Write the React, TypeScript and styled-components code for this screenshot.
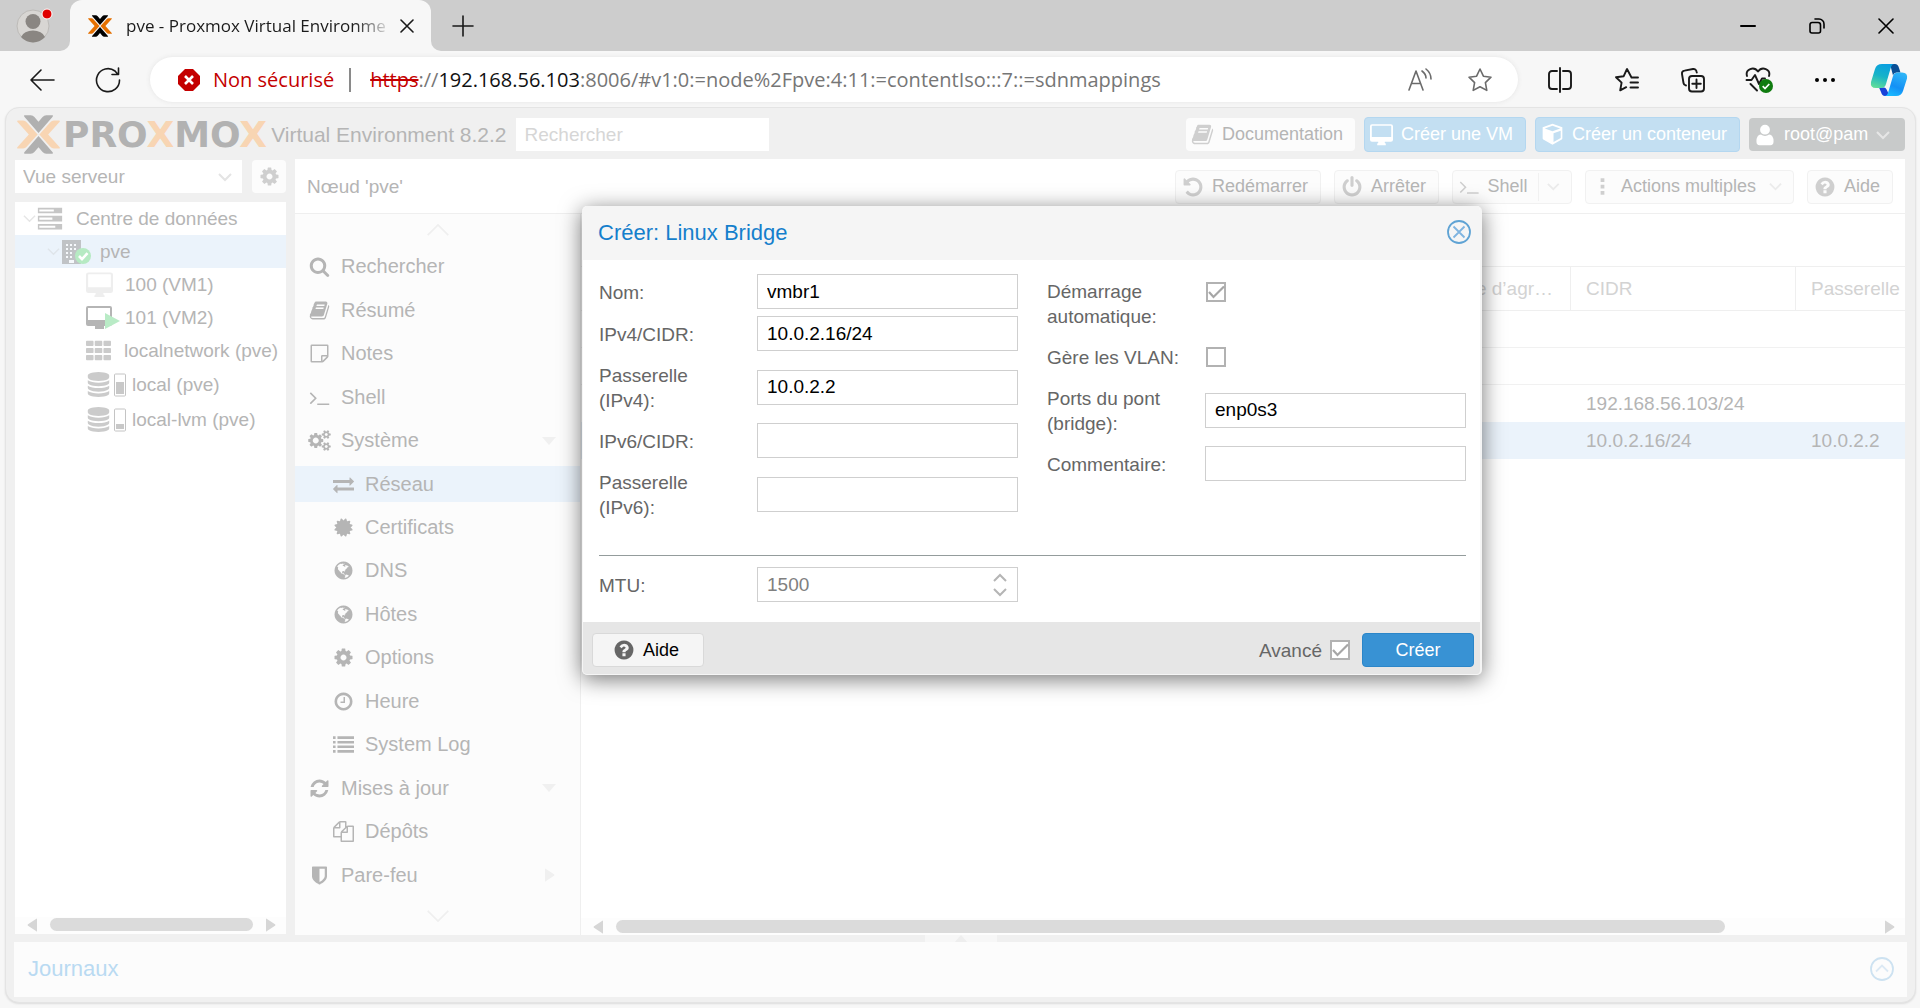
import React from "react";
import styled, { createGlobalStyle } from "styled-components";

const SANS = '"Liberation Sans", Arial, sans-serif';
const CHROME = '"Open Sans", "Noto Sans", sans-serif';

const GlobalStyle = createGlobalStyle`
  *, *::before, *::after { box-sizing: border-box; }
  body { margin: 0; overflow: hidden; background: #f7f7f7; font-family: ${SANS}; }
  button, input, select { font: inherit; color: inherit; margin: 0; }
  button { border: 0; background: none; padding: 0; cursor: default; }
`;

/* ---------- icon paths on a 1792 grid ---------- */
const P = {
  terminal:
    "M649 983l-466 466q-10 10-23 10t-23-10l-50-50q-10-10-10-23t10-23l393-393-393-393q-10-10-10-23t10-23l50-50q10-10 23-10t23 10l466 466q10 10 10 23t-10 23zm1079 457v64q0 14-9 23t-23 9h-960q-14 0-23-9t-9-23v-64q0-14 9-23t23-9h960q14 0 23 9t9 23z",
  book:
    "M1703 478q40 57 18 129l-275 906q-19 64-76.5 107.5t-122.5 43.5h-923q-77 0-148.5-53.5t-99.5-131.5q-24-67-2-127 0-4 3-27t4-37q1-8-3-21.5t-3-19.5q2-11 8-21t16.5-23.5 16.5-23.5q23-38 45-91.5t30-91.5q3-10 .5-30t-.5-28q3-11 17-28t17-23q21-36 42-92t25-90q1-9-2.5-32t.5-28q4-13 22-30.5t22-22.5q19-26 42.5-84.5t27.5-96.5q1-8-3-25.5t-2-26.5q2-8 9-18t18-23 17-21q8-12 16.5-30.5t15-35 16-36 19.5-32 26.5-23.5 36-11.5 47.5 5.5l-1 3q38-9 51-9h761q74 0 114 56t18 130l-274 906q-36 119-71.5 153.5t-128.5 34.5h-869q-27 0-38 15-11 16-1 43 24 70 144 70h923q29 0 56-15.5t35-41.5l300-987q7-22 5-57 38 15 59 43zm-1064 2q-4 13 2 22.5t20 9.5h608q13 0 25.5-9.5t16.5-22.5l21-64q4-13-2-22.5t-20-9.5h-608q-13 0-25.5 9.5t-16.5 22.5zm-83 256q-4 13 2 22.5t20 9.5h608q13 0 25.5-9.5t16.5-22.5l21-64q4-13-2-22.5t-20-9.5h-608q-13 0-25.5 9.5t-16.5 22.5z",
  globe:
    "M896 128q209 0 385.5 103t279.5 279.5 103 385.5-103 385.5-279.5 279.5-385.5 103-385.5-103-279.5-279.5-103-385.5 103-385.5 279.5-279.5 385.5-103zm274 521q-2 1-9.5 9.5t-13.5 9.5q2 0 4.5-5t5-11 3.5-7q6-7 22-15 14-6 52-12 34-8 51 11-2-2 9.5-13t14.5-12q3-2 15-4.5t15-7.5l2-22q-12 1-17.5-7t-6.5-21q0 2-6 8 0-7-4.5-8t-11.5 1-9 1q-10-3-15-7.5t-8-16.5-4-15q-2-5-9.5-11t-9.5-10q-1-2-2.5-5.5t-3-6.5-4-5.5-5.5-2.5-7 5-7.5 10-4.5 5q-3-2-6-1.5t-4.5 1-4.5 3-5 3.5q-3 2-8.5 3t-8.5 2q15-5-1-11-10-4-16-3 9-4 7.5-12t-8.5-14h5q-1-4-8.5-8.5t-17.5-8.5-13-6q-8-5-34-9.5t-33-.5q-5 6-4.5 10.5t4 14 3.5 12.5q1 6-5.5 13t-6.5 12q0 7 14 15.5t10 21.5q-3 8-16 16t-16 12q-5 8-1.5 18.5t10.5 16.5q2 2 1.5 4t-3.5 4.5-5.5 4-6.5 3.5l-3 2q-11 5-20.5-6t-13.5-26q-7-25-16-30-23-8-29 1-5-13-41-26-25-9-58-4 6-1 0-15-7-15-19-12 3-6 4-17.5t1-13.5q3-13 12-23 1-1 7-8.5t9.5-13.5.5-6q35 4 50-11 5-5 11.5-17t10.5-17q9-6 14-5.5t14.5 5.5 14.5 5q14 1 15.5-11t-7.5-20q12 1 3-17-4-7-8-9-12-4-27 5-8 4 2 8-1-1-9.5 10.5t-16.5 17.5-16-5q-1-1-5.5-13.5t-9.5-13.5q-8 0-16 15 3-8-11-15t-24-8q19-12-8-27-7-4-20.5-5t-19.5 4q-5 7-5.5 11.5t5 8 10.5 5.5 11.5 4 8.5 3q14 10 8 14-2 1-8.5 3.5t-11.5 4.5-6 4q-3 4 0 14t-2 14q-5-5-9-17.5t-7-16.5q7 9-25 6l-10-1q-4 0-16 2t-20.5 1-13.5-8q-4-8 0-20 1-4 4-2-4-3-11-9.5t-10-8.5q-46 15-94 41 6 1 12-1 5-2 13-6.5t10-5.5q34-14 42-7l5-5q14 16 20 25-7-4-30-1-20 6-22 12 7 12 5 18-4-3-11.5-10t-14.5-11-15-5q-16 0-22 1-146 80-235 222 7 7 12 8 4 1 5 9t2.5 11 11.5-3q9 8 3 19 1-1 44 27 19 17 21 21 3 11-10 18-1-2-9-9t-9-4q-3 5 .5 18.5t10.5 12.5q-7 0-9.5 16t-2.5 35.5-1 23.5l2 1q-3 12 5.5 34.5t21.5 19.5q-13 3 20 43 6 8 8 9 3 2 12 7.5t15 10 10 10.5q4 5 10 22.5t14 23.5q-2 6 9.5 20t10.5 23q-1 0-2.5 1t-2.5 1q3 7 15.5 14t15.5 13q1 3 2 10t3 11 8 2q2-20-24-62-15-25-17-29-3-5-5.5-15.5t-4.5-14.5q2 0 6 1.5t8.5 3.5 7.5 4 2 3q-3 7 2 17.5t12 18.5 17 19 12 13q6 6 14 19.5t0 13.5q9 0 20 10.5t17 19.5q5 8 8 26t5 24q2 7 8.5 13.5t12.5 9.5l16 8 13 7q5 2 18.5 10.5t21.5 11.5q10 4 16 4t14.5-2.5 13.5-3.5q15-2 29 15t21 21q36 19 55 11-2 1 .5 7.5t8 15.5 9 14.5 5.5 8.5q5 6 18 15t18 15q6-4 7-9-3 8 7 20t18 10q14-3 14-32-31 15-49-18 0-1-2.5-5.5t-4-8.5-2.5-8.5 0-7.5 5-3q9 0 10-3.5t-2-12.5-4-13q-1-8-11-20t-12-15q-5 9-16 8t-16-9q0 1-1.5 5.5t-1.5 6.5q-13 0-15-1 1-3 2.5-17.5t3.5-22.5q1-4 5.5-12t7.5-14.5 4-12.5-4.5-9.5-17.5-2.5q-19 1-26 20-1 3-3 10.5t-5 11.5-9 7q-7 3-24 2t-24-5q-13-8-22.5-29t-9.5-37q0-10 2.5-26.5t3-25-5.5-24.5q3-2 9-9.5t10-10.5q2-1 4.5-1.5t4.5 0 4-1.5 3-6q-1-1-4-3-3-3-4-3 7 3 28.5-1.5t27.5 1.5q15 11 22-2 0-1-2.5-9.5t-.5-13.5q5 27 29 9 3 3 15.5 5t17.5 5q3 2 7 5.5t5.5 4.5 5-.5 8.5-6.5q10 14 12 24 11 40 19 44 7 3 11 2t4.5-9.5 0-14-1.5-12.5l-1-8v-18l-1-8q-15-3-18.5-12t1.5-18.5 15-18.5q1-1 8-3.5t15.5-6.5 12.5-8q21-19 15-35 7 0 11-9-1 0-5-3t-7.5-5-4.5-2q9-5 2-16 5-3 7.5-11t7.5-10q9 12 21 2 8-8 1-16 5-7 20.5-10.5t18.5-9.5q7 2 8-2t1-12 3-12q4-5 15-9t13-5l17-11q3-4 0-4 18 2 31-11 10-11-6-20 3-6-3-9.5t-15-5.5q3-1 11.5-.5t10.5-1.5q15-10-7-16-17-5-43 12zm-163 877q206-36 351-189-3-3-12.5-4.5t-12.5-3.5q-18-7-24-8 1-7-2.5-13t-8-9-12.5-8-11-7q-2-2-7-6t-7-5.5-7.5-4.5-8.5-2-10 1l-3 1q-3 1-5.5 2.5t-5.5 3-4 3 0 2.5q-21-17-36-22-5-1-11-5.5t-10.5-7-10-1.5-11.5 7q-5 5-6 15t-2 13q-7-5 0-17.5t2-18.5q-3-6-10.5-4.5t-12 4.5-11.5 8.5-9 6.5-8.5 5.5-8.5 7.5q-3 4-6 12t-5 11q-2-4-11.5-6.5t-9.5-5.5q2 10 4 35t5 38q7 31-12 48-27 25-29 40-4 22 12 26 0 7-8 20.5t-7 21.5q0 6 2 16z",
  cog:
    "M1152 896q0-106-75-181t-181-75-181 75-75 181 75 181 181 75 181-75 75-181zm512-109v222q0 12-8 23t-20 13l-185 28q-19 54-39 91 35 50 107 138 10 12 10 25t-9 23q-27 37-99 108t-94 71q-12 0-26-9l-138-108q-44 23-91 38-16 136-29 186-7 28-36 28h-222q-14 0-24.5-8.5t-11.5-21.5l-28-184q-49-16-90-37l-141 107q-10 9-25 9-14 0-25-11-126-114-165-168-7-10-7-23 0-12 8-23 15-21 51-66.5t54-70.5q-27-50-41-99l-183-27q-13-2-21-12.5t-8-23.5v-222q0-12 8-23t19-13l186-28q14-46 39-92-40-57-107-138-10-12-10-24 0-10 9-23 26-36 98.5-107.5t94.5-71.5q13 0 26 10l138 107q44-23 91-38 16-136 29-186 7-28 36-28h222q14 0 24.5 8.5t11.5 21.5l28 184q49 16 90 37l142-107q9-9 24-9 13 0 25 10 129 119 165 170 7 8 7 22 0 12-8 23-15 21-51 66.5t-54 70.5q26 50 41 98l183 28q13 2 21 12.5t8 23.5z",
  cogs:
    "M896 896q0-106-75-181t-181-75-181 75-75 181 75 181 181 75 181-75 75-181zm768 512q0-52-38-90t-90-38-90 38-38 90q0 53 37.5 90.5t90.5 37.5 90.5-37.5 37.5-90.5zm0-1024q0-52-38-90t-90-38-90 38-38 90q0 53 37.5 90.5t90.5 37.5 90.5-37.5 37.5-90.5zm-384 421v185q0 10-7 19.5t-16 10.5l-155 24q-11 35-32 76 34 48 90 115 7 11 7 20 0 12-7 19-23 30-82.5 89.5t-78.5 59.5q-11 0-21-7l-115-90q-37 19-77 31-11 108-23 155-7 24-30 24h-186q-11 0-20-7.5t-10-17.5l-23-153q-34-10-75-31l-118 89q-7 7-20 7-11 0-21-8-144-133-144-160 0-9 7-19 10-14 41-53t47-61q-23-44-35-82l-152-24q-10-1-17-9.5t-7-19.5v-185q0-10 7-19.5t16-10.5l155-24q11-35 32-76-34-48-90-115-7-11-7-20 0-12 7-20 22-30 82-89t79-59q11 0 21 7l115 90q34-18 77-32 11-108 23-154 7-24 30-24h186q11 0 20 7.5t10 17.5l23 153q34 10 75 31l118-89q8-7 20-7 11 0 21 8 144 133 144 160 0 8-7 19-12 16-42 54t-45 60q23 48 34 82l152 23q10 2 17 10.5t7 19.5zm640 533v140q0 16-149 31-12 27-30 52 51 113 51 138 0 4-4 7-122 71-124 71-8 0-46-47t-52-68q-20 2-30 2t-30-2q-14 21-52 68t-46 47q-2 0-124-71-4-3-4-7 0-25 51-138-18-25-30-52-149-15-149-31v-140q0-16 149-31 13-29 30-52-51-113-51-138 0-4 4-7 4-2 35-20t59-34 30-16q8 0 46 46.5t52 67.5q20-2 30-2t30 2q51-71 92-112l6-2q4 0 124 70 4 3 4 7 0 25-51 138 17 23 30 52 149 15 149 31zm0-1024v140q0 16-149 31-12 27-30 52 51 113 51 138 0 4-4 7-122 71-124 71-8 0-46-47t-52-68q-20 2-30 2t-30-2q-14 21-52 68t-46 47q-2 0-124-71-4-3-4-7 0-25 51-138-18-25-30-52-149-15-149-31v-140q0-16 149-31 13-29 30-52-51-113-51-138 0-4 4-7 4-2 35-20t59-34 30-16q8 0 46 46.5t52 67.5q20-2 30-2t30 2q51-71 92-112l6-2q4 0 124 70 4 3 4 7 0 25-51 138 17 23 30 52 149 15 149 31z",
  search:
    "M1216 832q0-185-131.5-316.5t-316.5-131.5-316.5 131.5-131.5 316.5 131.5 316.5 316.5 131.5 316.5-131.5 131.5-316.5zm512 832q0 52-38 90t-90 38q-54 0-90-38l-343-342q-179 124-399 124-143 0-273.5-55.5t-225-150-150-225-55.5-273.5 55.5-273.5 150-225 225-150 273.5-55.5 273.5 55.5 225 150 150 225 55.5 273.5q0 220-124 399l343 343q37 37 37 90z",
  certificate:
    "M1504 896l138 135q30 28 20 70-12 41-52 51l-188 48 53 186q12 41-19 70-29 31-70 19l-186-53-48 188q-10 40-51 52-12 2-19 2-31 0-51-22l-135-138-135 138q-28 30-70 20-41-11-51-52l-48-188-186 53q-41 12-70-19-31-29-19-70l53-186-188-48q-40-10-52-51-10-42 20-70l138-135-138-135q-30-28-20-70 12-41 52-51l188-48-53-186q-12-41 19-70 29-31 70-19l186 53 48-188q10-41 51-51 41-12 70 19l135 139 135-139q29-30 70-19 41 10 51 51l48 188 186-53q41-12 70 19 31 29 19 70l-53 186 188 48q40 10 52 51 10 42-20 70z",
  refresh:
    "M1639 1056q0 5-1 7-64 268-268 434.5t-478 166.5q-146 0-282.5-55t-243.5-157l-129 129q-19 19-45 19t-45-19-19-45v-448q0-26 19-45t45-19h448q26 0 45 19t19 45-19 45l-137 137q71 66 161 102t187 36q134 0 250-65t186-179q11-17 53-117 8-23 30-23h192q13 0 22.5 9.5t9.5 22.5zm25-800v448q0 26-19 45t-45 19h-448q-26 0-45-19t-19-45 19-45l138-138q-148-137-349-137-134 0-250 65t-186 179q-11 17-53 117-8 23-30 23h-199q-13 0-22.5-9.5t-9.5-22.5v-7q65-268 270-434.5t480-166.5q146 0 284 55.5t245 156.5l130-129q19-19 45-19t45 19 19 45z",
  exchange:
    "M1792 1184v192q0 13-9.5 22.5t-22.5 9.5h-1376v192q0 13-9.5 22.5t-22.5 9.5q-12 0-24-10l-319-320q-9-9-9-22 0-14 9-23l320-320q9-9 23-9 13 0 22.5 9.5t9.5 22.5v192h1376q13 0 22.5 9.5t9.5 22.5zm0-544q0 14-9 23l-320 320q-9 9-23 9-13 0-22.5-9.5t-9.5-22.5v-192h-1376q-13 0-22.5-9.5t-9.5-22.5v-192q0-13 9.5-22.5t22.5-9.5h1376v-192q0-14 9-23t23-9q12 0 24 10l319 319q9 9 9 23z",
  clock:
    "M1024 544v448q0 14-9 23t-23 9h-320q-14 0-23-9t-9-23v-64q0-14 9-23t23-9h224v-352q0-14 9-23t23-9h64q14 0 23 9t9 23zm416 352q0-148-73-273t-198-198-273-73-273 73-198 198-73 273 73 273 198 198 273 73 273-73 198-198 73-273zm224 0q0 209-103 385.5t-279.5 279.5-385.5 103-385.5-103-279.5-279.5-103-385.5 103-385.5 279.5-279.5 385.5-103 385.5 103 279.5 279.5 103 385.5z",
  question:
    "M1024 1376v-192q0-14-9-23t-23-9h-192q-14 0-23 9t-9 23v192q0 14 9 23t23 9h192q14 0 23-9t9-23zm256-672q0-88-55.5-163t-138.5-116-170-41q-243 0-371 213-15 24 8 42l132 100q7 6 19 6 16 0 25-12 53-68 86-92 34-24 86-24 48 0 85.5 26t37.5 59q0 38-20 61t-68 45q-63 28-115.5 86.5t-52.5 125.5v36q0 14 9 23t23 9h192q14 0 23-9t9-23q0-19 21.5-49.5t54.5-49.5q32-18 49-28.5t46-35 44.5-48 28-60.5 12.5-81zm384 192q0 209-103 385.5t-279.5 279.5-385.5 103-385.5-103-279.5-279.5-103-385.5 103-385.5 279.5-279.5 385.5-103 385.5 103 279.5 279.5 103 385.5z",
  power:
    "M1664 896q0 156-61 298t-164 245-245 164-298 61-298-61-245-164-164-245-61-298q0-182 80.5-343t226.5-270q43-32 95.5-25t83.5 50q32 42 24.5 94.5t-49.5 84.5q-98 74-151.5 181t-53.5 228q0 104 40.5 198.5t109.5 163.5 163.5 109.5 198.5 40.5 198.5-40.5 163.5-109.5 109.5-163.5 40.5-198.5q0-121-53.5-228t-151.5-181q-42-32-49.5-84.5t24.5-94.5q31-43 84-50t95 25q146 109 226.5 270t80.5 343zm-640-768v640q0 52-38 90t-90 38-90-38-38-90v-640q0-52 38-90t90-38 90 38 38 90z",
  undo:
    "M1664 896q0 156-61 298t-164 245-245 164-298 61q-172 0-327-72.5t-264-204.5q-7-10-6.5-22.5t8.5-20.5l137-138q10-9 25-9 16 2 23 12 73 95 179 147t225 52q104 0 198.5-40.5t163.5-109.5 109.5-163.5 40.5-198.5-40.5-198.5-109.5-163.5-163.5-109.5-198.5-40.5q-98 0-188 35.5t-160 101.5l137 138q31 30 14 69-17 40-59 40h-448q-26 0-45-19t-19-45v-448q0-42 40-59 39-17 69 14l130 129q107-101 244.5-156.5t284.5-55.5q156 0 298 61t245 164 164 245 61 298z",
  database:
    "M896 768q237 0 443-43t325-127v170q0 69-103 128t-280 93.5-385 34.5-385-34.5-280-93.5-103-128v-170q119 84 325 127t443 43zm0 768q237 0 443-43t325-127v170q0 69-103 128t-280 93.5-385 34.5-385-34.5-280-93.5-103-128v-170q119 84 325 127t443 43zm0-384q237 0 443-43t325-127v170q0 69-103 128t-280 93.5-385 34.5-385-34.5-280-93.5-103-128v-170q119 84 325 127t443 43zm0-1152q208 0 385 34.5t280 93.5 103 128v128q0 69-103 128t-280 93.5-385 34.5-385-34.5-280-93.5-103-128v-128q0-69 103-128t280-93.5 385-34.5z",
  files:
    "M1696 384q40 0 68 28t28 68v1216q0 40-28 68t-68 28h-960q-40 0-68-28t-28-68v-288h-544q-40 0-68-28t-28-68v-672q0-40 20-88t48-76l408-408q28-28 76-48t88-20h416q40 0 68 28t28 68v328q68-40 128-40h416zm-544 213l-299 299h299v-299zm-640-384l-299 299h299v-299zm196 647l316-316v-416h-384v416q0 40-28 68t-68 28h-416v640h512v-256q0-40 20-88t48-76zm956 804v-1152h-384v416q0 40-28 68t-68 28h-416v640h896z",
  shield:
    "M1344 960v-640h-448v1137q119-63 213-137 235-184 235-360zm192-768v768q0 86-33.5 170.5t-83 150-118 127.5-126.5 103-121 77.5-89.5 49.5-42.5 20q-12 6-26 6t-26-6q-16-7-42.5-20t-89.5-49.5-121-77.5-126.5-103-118-127.5-83-150-33.5-170.5v-768q0-26 19-45t45-19h1152q26 0 45 19t19 45z",
  list:
    "M0 200h220v220h-220zM380 200h1412v220h-1412zM0 590h220v220h-220zM380 590h1412v220h-1412zM0 980h220v220h-220zM380 980h1412v220h-1412zM0 1370h220v220h-220zM380 1370h1412v220h-1412z",
  note:
    "M240 128h1312q112 0 112 112v890q0 80-56 136l-342 342q-56 56-136 56h-890q-112 0-112-112v-1312q0-112 112-112zm16 128v1280h768v-400q0-112 112-112h400v-768zm896 896v360l360-360z",
  cube:
    "M896 60l768 280v850q0 60-50 88l-718 420-718-420q-50-28-50-88v-850zm0 150l-600 218 600 218 600-218zm640 390l-560 204v680l560-320z",
  user:
    "M896 64a400 400 0 0 1 400 400a400 400 0 0 1-800 0a400 400 0 0 1 400-400zM560 860q150 110 336 110t336-110q360 40 360 560 0 308-260 308h-872q-260 0-260-308 0-520 360-560z",
  ellipsis:
    "M736 192h320v320h-320zM736 736h320v320h-320zM736 1280h320v320h-320z",
  grid:
    "M60 200h420q60 0 60 60v250q0 60-60 60h-420q-60 0-60-60v-250q0-60 60-60zm626 0h420q60 0 60 60v250q0 60-60 60h-420q-60 0-60-60v-250q0-60 60-60zm626 0h420q60 0 60 60v250q0 60-60 60h-420q-60 0-60-60v-250q0-60 60-60zM60 710h420q60 0 60 60v250q0 60-60 60h-420q-60 0-60-60v-250q0-60 60-60zm626 0h420q60 0 60 60v250q0 60-60 60h-420q-60 0-60-60v-250q0-60 60-60zm626 0h420q60 0 60 60v250q0 60-60 60h-420q-60 0-60-60v-250q0-60 60-60zM60 1220h420q60 0 60 60v250q0 60-60 60h-420q-60 0-60-60v-250q0-60 60-60zm626 0h420q60 0 60 60v250q0 60-60 60h-420q-60 0-60-60v-250q0-60 60-60zm626 0h420q60 0 60 60v250q0 60-60 60h-420q-60 0-60-60v-250q0-60 60-60z",
  server:
    "M60 120h1672v380h-1672zm100 120v140h1000v-140zM60 680h1672v380h-1672zm100 120v140h900v-140zM60 1240h1672v380h-1672zm100 120v140h1100v-140z",
  desktop:
    "M160 96h1472q160 0 160 160v1050q0 160-160 160h-480v100q80 0 80 100v60h-672v-60q0-100 80-100v-100h-480q-160 0-160-160v-1050q0-160 160-160zm20 120q-40 0-40 40v830h1512v-830q0-40-40-40z",
};

type IconName = keyof typeof P;

const Fa = ({ name, size = 21, color = "currentColor", wide = false }: { name: IconName; size?: number; color?: string; wide?: boolean }) => (
  <svg width={wide ? Math.round(size * 1.1) : size} height={size} viewBox={wide ? "0 0 1920 1792" : "0 0 1792 1792"} aria-hidden="true">
    <path d={P[name]} fill={color} fillRule="evenodd" />
  </svg>
);

const Chevron = ({ w = 14, dir = "down", color = "#d9d9d9", stroke = 2 }: { w?: number; dir?: "down" | "up"; color?: string; stroke?: number }) => (
  <svg width={w} height={w} viewBox="0 0 14 14" fill="none" aria-hidden="true">
    <path d={dir === "down" ? "M1 4l6 6 6-6" : "M1 10l6-6 6 6"} stroke={color} strokeWidth={stroke} />
  </svg>
);

const Triangle = ({ dir, color }: { dir: "left" | "right" | "down" | "up"; color: string }) => {
  const d = {
    left: "M11 1v12q0 1-1 0L2 7.800q-1-.8 0-1.600L10 1q1-1 1 0z",
    right: "M3 1v12q0 1 1 0l8-5.200q1-.8 0-1.600L4 1q-1-1-1 0z",
    down: "M0 3h14l-7 8z",
    up: "M7 3l7 8h-14z",
  }[dir];
  return (
    <svg width="14" height="14" viewBox="0 0 14 14" aria-hidden="true">
      <path d={d} fill={color} />
    </svg>
  );
};

const CrossMark = ({ size, dark, orange }: { size: number; dark: string; orange: string }) => (
  <svg width={size} height={size} viewBox="0 0 24 24" aria-hidden="true">
    <path d="M.6 4.200h2.800q1.200 0 2 1L11.500 12l-6.100 6.800q-.8 1-2 1H.6q-.9 0-.3-.8L6.600 12 .3 5q-.6-.8.3-.8zM23.400 4.200h-2.800q-1.200 0-2 1L12.500 12l6.100 6.800q.8 1 2 1h2.800q.9 0 .3-.8L17.400 12l6.300-7q.6-.8-.3-.8z" fill={orange} />
    <path d="M4.400 1.300h3.300q1.200 0 2 1L12 4.900l2.300-2.600q.8-1 2-1h3.300q.9 0 .3.800L12 11.100 4.100 2.100q-.6-.8.3-.8zM4.400 22.700h3.300q1.200 0 2-1L12 19.100l2.300 2.600q.8 1 2 1h3.300q.9 0 .3-.8L12 12.900l-7.900 9q-.6.8.3.8z" fill={dark} />
  </svg>
);

/* ---------- browser chrome ---------- */
const Window = styled.div`
  height: 100vh;
  display: flex;
  flex-direction: column;
  background: #f7f7f7;
`;
const TabStrip = styled.div`
  height: 51px;
  flex: none;
  display: flex;
  background: #f7f7f7;
  font-family: ${CHROME};
`;
const ProfileCell = styled.div`
  width: 70px;
  flex: none;
  display: flex;
  padding: 8px 0 0 16px;
  background: #cdcdcd;
  border-bottom-right-radius: 10px;
`;
const TabShell = styled.div`
  background: #cdcdcd;
  background: linear-gradient(#cdcdcd 50%, #f7f7f7 50%);
  display: flex;
`;
const Tab = styled.div`
  width: 361px;
  display: flex;
  align-items: center;
  padding: 0 12px 0 18px;
  background: #f7f7f7;
  border-radius: 12px 12px 0 0;
`;
const TabTitle = styled.span`
  flex: 1;
  margin: 0 3px 0 14px;
  overflow: hidden;
  white-space: nowrap;
  font-size: 17px;
  line-height: 24px;
  color: #1b1b1b;
  mask-image: linear-gradient(90deg, #000 86%, transparent 100%);
`;
const StripRest = styled.div`
  flex: 1;
  display: flex;
  align-items: center;
  padding-left: 16px;
  background: #cdcdcd;
  border-bottom-left-radius: 10px;
`;
const ChromeButton = styled.button<{ $w: number }>`
  width: ${(p) => p.$w}px;
  height: 36px;
  flex: none;
  display: flex;
  align-items: center;
  justify-content: center;
`;
const Push = styled.div`
  flex: 1;
`;
const Toolbar = styled.div`
  height: 56px;
  flex: none;
  display: flex;
  align-items: center;
  font-family: ${CHROME};
  padding: 1px 0 0 8px;
`;
const AddressBar = styled.div`
  flex: 1;
  height: 45px;
  margin: 0 9px 0 9px;
  padding: 0 8px 0 27px;
  display: flex;
  align-items: center;
  background: #fff;
  border-radius: 23px;
  box-shadow: 0 0 5px #e4e4e4;
  font-size: 20px;
  line-height: 28px;
  white-space: nowrap;
`;
const Warning = styled.span`
  color: #c40000;
  margin: 0 15px 0 12px;
`;
const Bar = styled.span`
  width: 2px;
  height: 24px;
  background: #8a8a8a;
  margin-right: 19px;
`;
const Url = styled.a`
  flex: 1;
  color: #767676;
  text-decoration: none;
  s { color: #c40000; }
  b { color: #111; font-weight: 400; }
`;

/* ---------- proxmox page ---------- */
const Page = styled.div`
  position: relative;
  flex: 1;
  min-height: 0;
  margin: 0 4px 5px 5px;
  display: flex;
  flex-direction: column;
  background: #f0f0f0;
  border: 1px solid #e4e4e4;
  border-radius: 14px;
  box-shadow: 0 1px 2px #dcdcdc;
  color: #b5b5b5;
  font-size: 19px;
  line-height: 25px;
`;
const Header = styled.header`
  height: 51px;
  flex: none;
  display: flex;
  align-items: center;
  padding: 2px 10px 0 11px;
`;
const Wordmark = styled.span`
  font: 700 36px/38px "DejaVu Sans", sans-serif;
  margin-left: 3px;
  color: #b2b2b2;
  i { font-style: normal; color: #f8d5b3; }
`;
const Version = styled.span`
  font-size: 21px;
  margin: 0 9px 0 4px;
  white-space: nowrap;
`;
const SearchBox = styled.input`
  width: 253px;
  height: 33px;
  border: 0;
  padding: 0 9px;
  background: #fff;
  &::placeholder { color: #d6d6d6; opacity: 1; }
`;
const HeaderButton = styled.button<{ $kind: "plain" | "blue" | "grey"; $w: number }>`
  width: ${(p) => p.$w}px;
  height: ${(p) => (p.$kind === "blue" ? 35 : 33)}px;
  margin-left: 9px;
  padding: 0 6px 0 5px;
  display: flex;
  align-items: center;
  gap: 8px;
  white-space: nowrap;
  font-size: 18px;
  border-radius: 4px;
  border: ${(p) => (p.$kind === "blue" ? "1px solid #b4d7f0" : "0")};
  background: ${(p) => ({ plain: "#fcfcfc", blue: "#c3dff2", grey: "#c8caca" })[p.$kind]};
  color: ${(p) => (p.$kind === "plain" ? "#b5b5b5" : "#fff")};
`;
const Columns = styled.div`
  flex: 1;
  min-height: 0;
  display: flex;
  gap: 9px;
  padding: 0 10px 0 9px;
`;
const Sidebar = styled.aside`
  width: 271px;
  flex: none;
  display: flex;
  flex-direction: column;
  gap: 9px;
  padding: 1px 0;
`;
const ViewRow = styled.div`
  display: flex;
  gap: 10px;
`;
const SelectWrap = styled.label`
  flex: 1;
  display: grid;
  align-items: center;
  > * { grid-area: 1 / 1; }
  > svg { justify-self: end; margin-right: 10px; pointer-events: none; }
`;
const ViewSelect = styled.select`
  appearance: none;
  width: 100%;
  height: 33px;
  border: 0;
  border-radius: 0;
  padding: 0 8px;
  background: #fff;
`;
const GearButton = styled.button`
  width: 34px;
  height: 33px;
  display: flex;
  align-items: center;
  justify-content: center;
  background: #fcfcfc;
  border-radius: 4px;
`;
const TreePanel = styled.div`
  flex: 1;
  min-height: 0;
  display: flex;
  flex-direction: column;
  background: #fff;
`;
const TreeList = styled.ul`
  list-style: none;
  margin: 0;
  padding: 0;
  flex: 1;
  overflow: hidden;
`;
const TreeRow = styled.li<{ $indent: number; $selected?: boolean; $h?: number }>`
  display: flex;
  align-items: center;
  height: ${(p) => p.$h ?? 33}px;
  padding-left: ${(p) => p.$indent}px;
  white-space: nowrap;
  background: ${(p) => (p.$selected ? "#ebf3fb" : "transparent")};
`;
const TreeText = styled.span<{ $gap: number }>`
  margin-left: ${(p) => p.$gap}px;
`;
const Icon = styled.span`
  display: flex;
  align-items: center;
`;
const ScrollRow = styled.div<{ $pad: string }>`
  height: 17px;
  flex: none;
  display: flex;
  align-items: center;
  gap: 10px;
  padding: ${(p) => p.$pad};
  background: #fdfdfd;
`;
const Thumb = styled.div`
  height: 13px;
  flex: 1;
  border-radius: 7px;
  background: #dbdbdb;
`;
const Track = styled.div`
  flex: 1;
  display: flex;
`;
const TrackRest = styled.div`
  flex: 0 0 147px;
`;

const Main = styled.main`
  flex: 1;
  min-width: 0;
  display: flex;
  flex-direction: column;
  background: #fff;
`;
const NodeBar = styled.div`
  height: 55px;
  flex: none;
  display: flex;
  align-items: center;
  gap: 13px;
  padding: 1px 12px 0;
  border-bottom: 1px solid #efefef;
`;
const NodeTitle = styled.h1`
  flex: 1;
  margin: 0;
  font-size: 19px;
  font-weight: 400;
`;
const ToolButton = styled.button<{ $w: number }>`
  width: ${(p) => p.$w}px;
  height: 34px;
  padding: 0 6px;
  display: flex;
  align-items: center;
  gap: 8px;
  white-space: nowrap;
  font-size: 18px;
  background: #fcfcfc;
  border: 1px solid #f1f1f1;
  border-radius: 4px;
  > svg:last-child:not(:first-child) { margin: 0 5px 0 auto; }
`;
const Split = styled.span`
  width: 1px;
  height: 28px;
  margin-left: 3px;
  background: #f1f1f1;
`;
const NodeBody = styled.div`
  flex: 1;
  min-height: 0;
  display: flex;
`;
const Nav = styled.nav`
  width: 286px;
  flex: none;
  display: flex;
  flex-direction: column;
  align-items: center;
  background: #fcfcfc;
  border-right: 1px solid #efefef;
  font-size: 20px;
`;
const NavMore = styled.div<{ $h: number }>`
  height: ${(p) => p.$h}px;
  flex: none;
  display: flex;
  align-items: center;
`;
const NavList = styled.ul`
  flex: 1;
  width: 100%;
  margin: 0;
  padding: 0;
  list-style: none;
  display: grid;
  grid-auto-rows: 1fr;
  align-items: center;
`;
const NavLink = styled.a<{ $sub?: boolean; $selected?: boolean }>`
  display: flex;
  align-items: center;
  height: 36px;
  padding: 0 24px 0 ${(p) => (p.$sub ? 36 : 12)}px;
  color: inherit;
  text-decoration: none;
  background: ${(p) => (p.$selected ? "#ebf3fb" : "transparent")};
  span { flex: 1; }
`;
const NavIcon = styled.i`
  width: 24px;
  margin-right: 10px;
  display: flex;
  justify-content: center;
`;
const Content = styled.section`
  flex: 1;
  min-width: 0;
  display: flex;
  flex-direction: column;
`;
const GridBar = styled.div`
  height: 52px;
  flex: none;
`;
const GridArea = styled.div`
  flex: 1;
  min-height: 0;
  overflow: hidden;
`;
const Table = styled.table`
  width: 100%;
  table-layout: fixed;
  border-collapse: separate;
  border-spacing: 0;
  td, th { padding: 0 0 0 15px; text-align: left; font-weight: 400; white-space: nowrap; overflow: hidden; }
  th { height: 45px; border: 1px solid #efefef; border-width: 1px 0 1px 1px; color: #d3d3d3; }
  th:first-child { border-left: 0; }
  td { height: 37px; padding-left: 16px; border-bottom: 1px solid #f1f1f1; }
`;
const Row = styled.tr<{ $selected?: boolean; $data?: boolean }>`
  td { background: ${(p) => (p.$selected ? "#ebf3fb" : "#fff")}; ${(p) => p.$data && "border-bottom: 0;"} }
`;
const Splitter = styled.div`
  height: 7px;
  flex: none;
  display: flex;
  justify-content: center;
`;
const SplitHandle = styled.div`
  width: 72px;
  height: 7px;
  display: flex;
  justify-content: center;
  align-items: center;
  background: #f7f7f7;
`;
const Journal = styled.footer`
  height: 55px;
  flex: none;
  margin: 0 8px 5px;
  padding: 0 13px 2px 14px;
  display: flex;
  align-items: center;
  justify-content: space-between;
  background: #fcfcfc;
  color: #b9daf2;
  font-size: 22px;
`;

/* ---------- dialog ---------- */
const Dialog = styled.form`
  position: absolute;
  left: 576px;
  top: 98px;
  width: 900px;
  background: #fff;
  border: 1px solid #f5f5f5;
  border-width: 0 2px 1px 1px;
  border-radius: 5px;
  overflow: hidden;
  box-shadow: 0 4px 22px rgba(0, 0, 0, 0.55);
  color: #666;
`;
const DialogHead = styled.div`
  height: 54px;
  padding: 0 8px 2px 15px;
  display: flex;
  align-items: center;
  justify-content: space-between;
  background: #f5f5f5;
`;
const DialogTitle = styled.h2`
  margin: 0;
  font-size: 22px;
  font-weight: 400;
  color: #157fcc;
`;
const DialogBody = styled.div`
  padding: 14px 14px 20px 16px;
`;
const FormColumns = styled.div`
  display: grid;
  grid-template-columns: minmax(0, 1fr) minmax(0, 1fr);
  column-gap: 29px;
`;
const FormColumn = styled.div`
  display: flex;
  flex-direction: column;
  gap: 7px;
`;
const Field = styled.div<{ $top?: boolean }>`
  display: flex;
  align-items: ${(p) => (p.$top ? "flex-start" : "center")};
`;
const FieldLabel = styled.label`
  width: 158px;
  flex: none;
  padding: 5px 0 3px;
  white-space: pre-line;
`;
const TextInput = styled.input`
  flex: 1;
  min-width: 0;
  height: 35px;
  padding: 0 9px;
  border: 1px solid #cfcfcf;
  background: #fff;
  color: #000;
  outline: 0;
`;
const SpinBox = styled.div`
  width: 261px;
  height: 35px;
  display: flex;
  align-items: center;
  padding-right: 10px;
  border: 1px solid #cfcfcf;
  input { border: 0; height: 33px; }
  input::placeholder { color: #808080; opacity: 1; }
`;
const SpinButtons = styled.div`
  display: flex;
  flex-direction: column;
  button { height: 14px; display: flex; align-items: center; }
`;
const CheckCell = styled.div`
  height: 35px;
  display: flex;
  align-items: center;
  padding: 1px 0 0 1px;
`;
const CheckWrap = styled.span`
  display: inline-grid;
  > * { grid-area: 1 / 1; }
  svg { pointer-events: none; }
`;
const CheckInput = styled.input`
  appearance: none;
  width: 20px;
  height: 20px;
  border: 2px solid #b2b2b2;
  background: #fff;
`;
const Rule = styled.hr`
  margin: 32px 0 11px;
  border: 0;
  height: 1px;
  background: #949c9c;
`;
const DialogFoot = styled.div`
  padding: 11px 6px 7px 9px;
  display: flex;
  align-items: center;
  background: #e6e6e6;
`;
const FootButton = styled.button<{ $primary?: boolean }>`
  width: 112px;
  height: 34px;
  padding-right: ${(p) => (p.$primary ? 0 : 4)}px;
  display: flex;
  align-items: center;
  justify-content: center;
  gap: 8px;
  font-size: 18px;
  border-radius: 4px;
  border: 1px solid ${(p) => (p.$primary ? "#2b86c9" : "#d9d9d9")};
  background: ${(p) => (p.$primary ? "#3892d4" : "#f5f5f5")};
  color: ${(p) => (p.$primary ? "#fff" : "#000")};
`;
const AdvLabel = styled.label`
  margin: 0 8px 0 auto;
`;
const FootSpacer = styled.div`
  width: 12px;
`;

const Check = ({ id, checked }: { id: string; checked: boolean }) => (
  <CheckWrap>
    <CheckInput id={id} type="checkbox" defaultChecked={checked} />
    {checked && (
      <svg width="20" height="20" viewBox="0 0 20 20" fill="none" aria-hidden="true">
        <path d="M3 10l4.500 5L18 4.500" stroke="#a6a6a6" strokeWidth="2.200" />
      </svg>
    )}
  </CheckWrap>
);

const TextField = ({ id, label, value = "" }: { id: string; label: string; value?: string }) => (
  <Field>
    <FieldLabel htmlFor={id}>{label}</FieldLabel>
    <TextInput id={id} type="text" defaultValue={value} />
  </Field>
);

type NavEntry = { icon: IconName; text: string; sub?: boolean; selected?: boolean; wide?: boolean; arrow?: "down" | "right" };
const NAV: NavEntry[] = [
  { icon: "search", text: "Rechercher" },
  { icon: "book", text: "Résumé" },
  { icon: "note", text: "Notes" },
  { icon: "terminal", text: "Shell" },
  { icon: "cogs", text: "Système", wide: true, arrow: "down" },
  { icon: "exchange", text: "Réseau", sub: true, selected: true },
  { icon: "certificate", text: "Certificats", sub: true },
  { icon: "globe", text: "DNS", sub: true },
  { icon: "globe", text: "Hôtes", sub: true },
  { icon: "cog", text: "Options", sub: true },
  { icon: "clock", text: "Heure", sub: true },
  { icon: "list", text: "System Log", sub: true },
  { icon: "refresh", text: "Mises à jour", arrow: "down" },
  { icon: "files", text: "Dépôts", sub: true },
  { icon: "shield", text: "Pare-feu", arrow: "right" },
];

const Meter = ({ fill }: { fill: number }) => (
  <svg width="12" height="24" viewBox="0 0 12 24" aria-hidden="true">
    <rect x="0.500" y="1" width="11" height="22" rx="1" fill="#fff" stroke="#c4c4c4" />
    <rect x="2" y={21 - fill} width="8" height={fill} fill="#c8c8c8" />
  </svg>
);

const line = { fill: "none", stroke: "#1a1a1a", strokeWidth: 1.6, strokeLinecap: "round", strokeLinejoin: "round" } as const;

const Chrome = () => (
  <>
    <TabStrip>
      <ProfileCell>
        <svg width="38" height="38" viewBox="0 0 38 38" aria-hidden="true">
          <circle cx="17" cy="18" r="16" fill="#d8d6d3" stroke="#bdbbb8" />
          <circle cx="17" cy="13.500" r="7.500" fill="#8a8682" />
          <path d="M5 29a12.500 9 0 0 1 24 0 16 16 0 0 1-24 0z" fill="#8a8682" />
          <circle cx="31" cy="6" r="5" fill="#e00000" stroke="#fff" />
        </svg>
      </ProfileCell>
      <TabShell>
        <Tab>
          <CrossMark size={24} dark="#000" orange="#e57000" />
          <TabTitle>pve - Proxmox Virtual Environme</TabTitle>
          <ChromeButton $w={24} aria-label="Fermer l’onglet">
            <svg width="14" height="14" viewBox="0 0 14 14"><path d="M1 1l12 12M13 1L1 13" {...line} /></svg>
          </ChromeButton>
        </Tab>
      </TabShell>
      <StripRest>
        <ChromeButton $w={32} aria-label="Nouvel onglet">
          <svg width="22" height="22" viewBox="0 0 22 22"><path d="M11 1v20M1 11h20" {...line} /></svg>
        </ChromeButton>
        <Push />
        <ChromeButton $w={69} aria-label="Réduire">
          <svg width="16" height="16" viewBox="0 0 16 16"><path d="M1 8h14" {...line} stroke="#000" strokeWidth="2" /></svg>
        </ChromeButton>
        <ChromeButton $w={69} aria-label="Restaurer">
          <svg width="16" height="16" viewBox="0 0 16 16"><path d="M3 4.500h6a2.500 2.500 0 0 1 2.500 2.500v6a2 2 0 0 1-2 2H3a2 2 0 0 1-2-2V6.500a2 2 0 0 1 2-2zM6 1h4a5 5 0 0 1 5 5v4" {...line} stroke="#000" /></svg>
        </ChromeButton>
        <ChromeButton $w={69} aria-label="Fermer">
          <svg width="16" height="16" viewBox="0 0 16 16"><path d="M1 1l14 14M15 1L1 15" {...line} stroke="#000" /></svg>
        </ChromeButton>
      </StripRest>
    </TabStrip>
    <Toolbar>
      <ChromeButton $w={67} aria-label="Retour">
        <svg width="26" height="24" viewBox="0 0 26 24"><path d="M25 12H2M12 2L2 12l10 10" {...line} /></svg>
      </ChromeButton>
      <ChromeButton $w={66} aria-label="Actualiser">
        <svg width="26" height="26" viewBox="0 0 26 26"><path d="M24.500 13A11.500 11.500 0 1 1 20 4l3 3.500M23.500 1v6.500H17" {...line} /></svg>
      </ChromeButton>
      <AddressBar>
        <svg width="24" height="24" viewBox="0 0 24 24" aria-hidden="true">
          <path d="M8 1h8l7 7v8l-7 7H8l-7-7V8z" fill="#c40000" />
          <path d="M8 8l8 8M16 8l-8 8" stroke="#fff" strokeWidth="2.600" />
        </svg>
        <Warning>Non sécurisé</Warning>
        <Bar />
        <Url href="#"><s>https</s>://<b>192.168.56.103</b>:8006/#v1:0:=node%2Fpve:4:11:=contentIso:::7::=sdnmappings</Url>
        <ChromeButton $w={60} aria-label="Lecture à voix haute">
          <svg width="26" height="24" viewBox="0 0 26 24"><path d="M2 22L9 3l7 19M4.500 15.500h9M15 3q4 3 4 7M19 1q5 4 5 10" {...line} stroke="#6b6b6b" /></svg>
        </ChromeButton>
        <ChromeButton $w={60} aria-label="Favori">
          <svg width="26" height="26" viewBox="0 0 26 26"><path d="M13 2l3.400 7.200 7.600 1-5.600 5.400 1.400 7.800L13 19.700l-6.800 3.700 1.400-7.800L2 10.200l7.600-1z" {...line} stroke="#6b6b6b" /></svg>
        </ChromeButton>
      </AddressBar>
      <ChromeButton $w={66} aria-label="Écran partagé">
        <svg width="26" height="26" viewBox="0 0 26 26"><path d="M10 4H5a3 3 0 0 0-3 3v12a3 3 0 0 0 3 3h5M16 4h5a3 3 0 0 1 3 3v12a3 3 0 0 1-3 3h-5M13 1v24" {...line} strokeWidth="1.900" /></svg>
      </ChromeButton>
      <ChromeButton $w={67} aria-label="Favoris">
        <svg width="26" height="26" viewBox="0 0 26 26"><path d="M24 10.500h-6.500L13 2 9.700 9.200l-7.700 1 5.600 5.400L6.200 23.400l6-3.200M16.500 15.500H24M16.500 20.500H24" {...line} strokeWidth="1.900" /></svg>
      </ChromeButton>
      <ChromeButton $w={66} aria-label="Collections">
        <svg width="26" height="26" viewBox="0 0 26 26"><path d="M12 9h9a3 3 0 0 1 3 3v9.500a3 3 0 0 1-3 3h-9a3 3 0 0 1-3-3V12a3 3 0 0 1 3-3zM16.500 12.500v8.500M12.300 16.700h8.500M6 18.500a3 3 0 0 1-2.500-2.500L2 7a3 3 0 0 1 2.500-3.400L13 2a3 3 0 0 1 3.500 2.500l.3 1" {...line} strokeWidth="1.900" /></svg>
      </ChromeButton>
      <ChromeButton $w={66} aria-label="Performances">
        <svg width="28" height="28" viewBox="0 0 28 28"><path d="M2 10C0 3 9 0 13 5.500 17 0 26 3 24 10M1.500 14h5l3.500-5 4 9 3-5.500h3M5.500 18l6.500 6.500" {...line} strokeWidth="1.900" /><circle cx="21" cy="20" r="7" fill="#107c10" /><path d="M17.700 20.200l2.300 2.300 4.300-4.500" fill="none" stroke="#fff" strokeWidth="1.700" /></svg>
      </ChromeButton>
      <ChromeButton $w={66} aria-label="Paramètres et plus">
        <svg width="22" height="6" viewBox="0 0 22 6"><circle cx="3" cy="3" r="2" /><circle cx="11" cy="3" r="2" /><circle cx="19" cy="3" r="2" /></svg>
      </ChromeButton>
      <ChromeButton $w={62} aria-label="Copilot">
        <svg width="38" height="34" viewBox="0 0 38 34">
          <defs>
            <linearGradient id="cpA" x1="0.600" y1="0" x2="0.300" y2="1"><stop offset="0" stopColor="#0a9fe0" /><stop offset="0.500" stopColor="#17b3c8" /><stop offset="1" stopColor="#5fdc9a" /></linearGradient>
            <linearGradient id="cpB" x1="0.700" y1="0" x2="0.300" y2="1"><stop offset="0" stopColor="#2fb5f7" /><stop offset="0.600" stopColor="#1490f5" /><stop offset="1" stopColor="#19b9ff" /></linearGradient>
          </defs>
          <path d="M20 1h5q3 0 4 4l1.500 4.500H27q-3 0-4 3z" fill="#0a4f96" />
          <path d="M9 24.500h5q3 0 5 8.500h-4q-3 0-4-4z" fill="#1842d8" />
          <path d="M12 1h12q-2 0-3 3l-5 17q-1 4-5 4H6q-6 0-5-6L5 6q1.500-5 7-5z" fill="url(#cpA)" />
          <path d="M26 33H15q2 0 3-3l5-17q1-3.500 5-3.500h4q6 0 5 6L33 28q-1.500 5-7 5z" fill="url(#cpB)" />
        </svg>
      </ChromeButton>
    </Toolbar>
  </>
);

const Tree = () => (
  <TreePanel>
    <TreeList>
      <TreeRow $indent={8}>
        <Chevron w={13} stroke={1.5} color="#e6e6e6" />
        <TreeText $gap={1}><Icon><Fa name="server" size={26} color="#c6c6c6" /></Icon></TreeText>
        <TreeText $gap={13}>Centre de données</TreeText>
      </TreeRow>
      <TreeRow $indent={32} $selected>
        <Chevron w={13} stroke={1.5} color="#dfe5ea" />
        <Icon>
          <svg width="32" height="28" viewBox="0 0 32 28" aria-hidden="true">
            <path d="M2 2h19v24h-19z" fill="#c0c3c6" />
            <path d="M6 6h2v2H6zM10 6h2v2h-2zM14 6h2v2h-2zM6 10h2v2H6zM10 10h2v2h-2zM14 10h2v2h-2zM6 14h2v2H6zM10 14h2v2h-2zM6 18h2v2H6zM10 18h2v2h-2zM9 22h5v3H9z" fill="#f6f9fc" />
            <circle cx="23" cy="18" r="8" fill="#b6eac3" />
            <path d="M19 18l3 3.200 5.500-6" fill="none" stroke="#fff" strokeWidth="2.600" />
          </svg>
        </Icon>
        <TreeText $gap={8}>pve</TreeText>
      </TreeRow>
      <TreeRow $indent={71}>
        <Icon><Fa name="desktop" size={27} color="#eeeeee" /></Icon>
        <TreeText $gap={12}>100 (VM1)</TreeText>
      </TreeRow>
      <TreeRow $indent={71}>
        <Icon>
          <svg width="34" height="27" viewBox="0 0 34 27" aria-hidden="true">
            <path d="M2 2h22q2 0 2 2v16q0 2-2 2h-6v3h-9v-3H2q-2 0-2-2V4q0-2 2-2zM2 4v12h22V4z" fill="#b5b5b5" fillRule="evenodd" />
            <path d="M19 9l15 8-15 8z" fill="#b9ebc6" />
          </svg>
        </Icon>
        <TreeText $gap={5}>101 (VM2)</TreeText>
      </TreeRow>
      <TreeRow $indent={71}>
        <Icon><Fa name="grid" size={25} color="#cbcbcb" /></Icon>
        <TreeText $gap={13}>localnetwork (pve)</TreeText>
      </TreeRow>
      <TreeRow $indent={71} $h={35}>
        <Icon><Fa name="database" size={25} color="#cbcbcb" /></Icon>
        <TreeText $gap={3}><Icon><Meter fill={12} /></Icon></TreeText>
        <TreeText $gap={6}>local (pve)</TreeText>
      </TreeRow>
      <TreeRow $indent={71} $h={35}>
        <Icon><Fa name="database" size={25} color="#cbcbcb" /></Icon>
        <TreeText $gap={3}><Icon><Meter fill={5} /></Icon></TreeText>
        <TreeText $gap={6}>local-lvm (pve)</TreeText>
      </TreeRow>
    </TreeList>
    <ScrollRow $pad="0 9px 2px 11px">
      <Triangle dir="left" color="#d6d6d6" />
      <Thumb />
      <Triangle dir="right" color="#d6d6d6" />
    </ScrollRow>
  </TreePanel>
);

const BridgeDialog = () => (
  <Dialog onSubmit={(e: React.FormEvent) => e.preventDefault()}>
    <DialogHead>
      <DialogTitle>Créer: Linux Bridge</DialogTitle>
      <ChromeButton type="button" $w={26} aria-label="Fermer la fenêtre">
        <svg width="24" height="24" viewBox="0 0 24 24" fill="none">
          <circle cx="12" cy="12" r="11" stroke="#5fa3d4" strokeWidth="1.800" />
          <path d="M6.500 6.500l11 11M17.500 6.500l-11 11" stroke="#7fb4e0" strokeWidth="1.800" />
        </svg>
      </ChromeButton>
    </DialogHead>
    <DialogBody>
      <FormColumns>
        <FormColumn>
          <TextField id="nom" label="Nom:" value="vmbr1" />
          <TextField id="ip4" label="IPv4/CIDR:" value="10.0.2.16/24" />
          <TextField id="gw4" label={"Passerelle\n(IPv4):"} value="10.0.2.2" />
          <TextField id="ip6" label="IPv6/CIDR:" />
          <TextField id="gw6" label={"Passerelle\n(IPv6):"} />
        </FormColumn>
        <FormColumn>
          <Field $top>
            <FieldLabel htmlFor="auto">{"Démarrage\nautomatique:"}</FieldLabel>
            <CheckCell><Check id="auto" checked /></CheckCell>
          </Field>
          <Field>
            <FieldLabel htmlFor="vlan">Gère les VLAN:</FieldLabel>
            <CheckCell><Check id="vlan" checked={false} /></CheckCell>
          </Field>
          <TextField id="ports" label={"Ports du pont\n(bridge):"} value="enp0s3" />
          <TextField id="comment" label="Commentaire:" />
        </FormColumn>
      </FormColumns>
      <Rule />
      <Field>
        <FieldLabel htmlFor="mtu">MTU:</FieldLabel>
        <SpinBox>
          <TextInput id="mtu" type="text" inputMode="numeric" placeholder="1500" />
          <SpinButtons>
            <button type="button" aria-label="Augmenter"><Chevron w={14} dir="up" color="#b5b5b5" /></button>
            <button type="button" aria-label="Diminuer"><Chevron w={14} color="#b5b5b5" /></button>
          </SpinButtons>
        </SpinBox>
      </Field>
    </DialogBody>
    <DialogFoot>
      <FootButton type="button"><Fa name="question" size={22} color="#666" />Aide</FootButton>
      <AdvLabel htmlFor="adv">Avancé</AdvLabel>
      <Check id="adv" checked />
      <FootSpacer />
      <FootButton $primary type="submit">Créer</FootButton>
    </DialogFoot>
  </Dialog>
);

export default function App() {
  return (
    <Window>
      <GlobalStyle />
      <Chrome />
      <Page>
        <Header>
          <CrossMark size={43} dark="#b0b0b0" orange="#f8d5b3" />
          <Wordmark>PRO<i>X</i>MO<i>X</i></Wordmark>
          <Version>Virtual Environment 8.2.2</Version>
          <SearchBox type="search" placeholder="Rechercher" aria-label="Rechercher" />
          <Push />
          <HeaderButton $kind="plain" $w={169}><Fa name="book" color="#cfcfcf" size={23} />Documentation</HeaderButton>
          <HeaderButton $kind="blue" $w={162}><Fa name="desktop" size={23} />Créer une VM</HeaderButton>
          <HeaderButton $kind="blue" $w={205}><Fa name="cube" size={23} />Créer un conteneur</HeaderButton>
          <HeaderButton $kind="grey" $w={156}><Fa name="user" size={22} />root@pam<Chevron w={14} color="#e6e6e6" /></HeaderButton>
        </Header>
        <Columns>
          <Sidebar>
            <ViewRow>
              <SelectWrap>
                <ViewSelect aria-label="Vue"><option>Vue serveur</option></ViewSelect>
                <Chevron w={14} color="#e4e4e4" />
              </SelectWrap>
              <GearButton aria-label="Options de vue"><Fa name="cog" size={21} color="#cfcfcf" /></GearButton>
            </ViewRow>
            <Tree />
          </Sidebar>
          <Main>
            <NodeBar>
              <NodeTitle>Nœud 'pve'</NodeTitle>
              <ToolButton $w={146}><Fa name="undo" size={22} color="#cfcfcf" />Redémarrer</ToolButton>
              <ToolButton $w={105}><Fa name="power" size={22} color="#cfcfcf" />Arrêter</ToolButton>
              <ToolButton $w={120}><Fa name="terminal" size={21} color="#cfcfcf" />Shell<Split /><Chevron w={13} color="#ebebeb" /></ToolButton>
              <ToolButton $w={209}><Fa name="ellipsis" size={21} color="#cfcfcf" />Actions multiples<Chevron w={13} color="#ebebeb" /></ToolButton>
              <ToolButton $w={86}><Fa name="question" size={22} color="#cfcfcf" />Aide</ToolButton>
            </NodeBar>
            <NodeBody>
              <Nav>
                <NavMore $h={31}><Chevron w={24} dir="up" color="#efefef" stroke={1} /></NavMore>
                <NavList>
                  {NAV.map((n) => (
                    <li key={n.text}>
                      <NavLink href="#" $sub={n.sub} $selected={n.selected}>
                        <NavIcon><Fa name={n.icon} wide={n.wide} /></NavIcon>
                        <span>{n.text}</span>
                        {n.arrow && <Triangle dir={n.arrow} color="#f0f0f0" />}
                      </NavLink>
                    </li>
                  ))}
                </NavList>
                <NavMore $h={38}><Chevron w={24} color="#efefef" stroke={1} /></NavMore>
              </Nav>
              <Content>
                <GridBar />
                <GridArea>
                  <Table>
                    <colgroup>
                      <col />
                      <col width="147" />
                      <col width="225" />
                      <col width="110" />
                    </colgroup>
                    <thead>
                      <tr>
                        <th />
                        <th>Mode d’agr…</th>
                        <th>CIDR</th>
                        <th>Passerelle</th>
                      </tr>
                    </thead>
                    <tbody>
                      <Row><td /><td /><td /><td /></Row>
                      <Row><td /><td /><td /><td /></Row>
                      <Row $data><td /><td /><td>192.168.56.103/24</td><td /></Row>
                      <Row $data $selected><td /><td /><td>10.0.2.16/24</td><td>10.0.2.2</td></Row>
                    </tbody>
                  </Table>
                </GridArea>
                <ScrollRow $pad="0 9px 0 11px">
                  <Triangle dir="left" color="#d6d6d6" />
                  <Track><Thumb /><TrackRest /></Track>
                  <Triangle dir="right" color="#d6d6d6" />
                </ScrollRow>
              </Content>
            </NodeBody>
          </Main>
        </Columns>
        <Splitter><SplitHandle><Triangle dir="up" color="#eeeeee" /></SplitHandle></Splitter>
        <Journal>
          Journaux
          <ChromeButton $w={24} aria-label="Agrandir les journaux">
            <svg width="24" height="24" viewBox="0 0 24 24" fill="none">
              <circle cx="12" cy="12" r="11" stroke="#cde2f1" strokeWidth="1.800" />
              <path d="M6 14.500l6-6 6 6" stroke="#dce9f4" strokeWidth="1.800" />
            </svg>
          </ChromeButton>
        </Journal>
        <BridgeDialog />
      </Page>
    </Window>
  );
}
